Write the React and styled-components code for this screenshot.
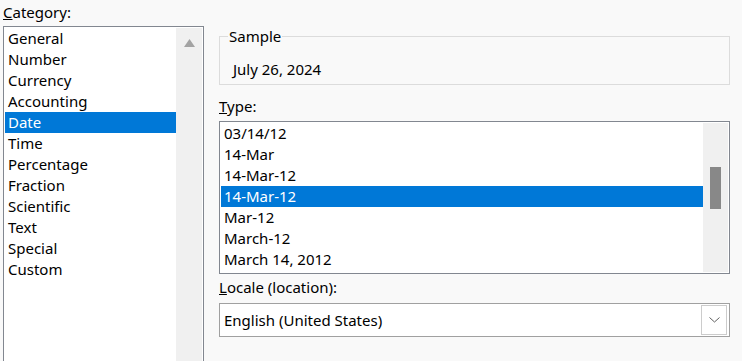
import React from 'react';
import styled, { createGlobalStyle } from 'styled-components';

const GlobalStyle = createGlobalStyle`
  body {
    margin: 0;
    background: #f9f9f9;
    font-family: "Noto Sans", "Liberation Sans", sans-serif;
    font-size: 15px;
    color: #000;
    overflow: hidden;
  }
`;

const Dialog = styled.div`
  display: flex;
  gap: 15px;
  padding: 2px 0 0 3px;
  height: 361px;
  box-sizing: border-box;
  overflow: hidden;
`;

const Column = styled.div`
  display: flex;
  flex-direction: column;
  width: ${p => p.$width}px;
  flex-shrink: 0;
`;

const Label = styled.div`
  line-height: 21px;
  height: 21px;
  margin-top: ${p => p.$top || 0}px;
  margin-bottom: ${p => p.$bottom || 0}px;
  white-space: nowrap;
`;

const ListBox = styled.div`
  display: flex;
  border: 1px solid #828790;
  background: #fff;
  padding: 1px;
  height: ${p => p.$height}px;
  flex-shrink: ${p => (p.$grow ? 1 : 0)};
  flex-grow: ${p => (p.$grow ? 1 : 0)};
  margin-bottom: ${p => (p.$grow ? -4 : 0)}px;
`;

const Items = styled.div`
  flex: 1;
  min-width: 0;
`;

const Item = styled.div`
  height: 21px;
  line-height: 21px;
  padding-left: 3px;
  white-space: nowrap;
  background: ${p => (p.$selected ? '#0078d7' : 'transparent')};
  color: ${p => (p.$selected ? '#fff' : '#000')};
`;

const ScrollTrack = styled.div`
  width: ${p => p.$width}px;
  background: #f0f0f0;
  display: flex;
  flex-direction: column;
  align-items: center;
`;

const ArrowUp = styled.svg`
  margin-top: 11px;
  display: block;
`;

const Thumb = styled.div`
  width: 11px;
  height: 42px;
  margin-top: 44px;
  background: #888;
`;

const Group = styled.fieldset`
  margin: 24px 0 0;
  padding: 0 0 4px 0;
  border: 1px solid #dcdcdc;
  min-width: 0;
`;

const Legend = styled.legend`
  margin-left: 8px;
  padding: 0 1px;
  line-height: 20px;
  height: 20px;
`;

const SampleValue = styled.div`
  margin-top: 13px;
  padding-left: 13px;
  line-height: 21px;
`;

const Combo = styled.div`
  display: flex;
  align-items: center;
  height: 34px;
  box-sizing: border-box;
  border: 1px solid #a0a0a0;
  background: #fff;
  padding: 1px 1px 1px 4px;
  flex-shrink: 0;
`;

const ComboText = styled.div`
  flex: 1;
  line-height: 21px;
  white-space: nowrap;
`;

const DropButton = styled.div`
  width: 26px;
  height: 30px;
  box-sizing: border-box;
  border: 1px solid #cccccc;
  display: flex;
  align-items: center;
  justify-content: center;
  margin-right: 1px;
`;

const categories = [
  'General', 'Number', 'Currency', 'Accounting', 'Date', 'Time',
  'Percentage', 'Fraction', 'Scientific', 'Text', 'Special', 'Custom',
];

const types = [
  '03/14/12', '14-Mar', '14-Mar-12', '14-Mar-12', 'Mar-12', 'March-12', 'March 14, 2012',
];

export default function App() {
  return (
    <>
      <GlobalStyle />
      <Dialog>
        <Column $width={201}>
          <Label $bottom={3}><u>C</u>ategory:</Label>
          <ListBox $height={340} $grow>
            <Items>
              {categories.map(c => (
                <Item key={c} $selected={c === 'Date'}>{c}</Item>
              ))}
            </Items>
            <ScrollTrack $width={26}>
              <ArrowUp width="11" height="8" viewBox="0 0 11 8">
                <polygon points="5.5,0 11,8 0,8" fill="#a3a3a3" />
              </ArrowUp>
            </ScrollTrack>
          </ListBox>
        </Column>

        <Column $width={511}>
          <Group>
            <Legend>Sample</Legend>
            <SampleValue>July 26, 2024</SampleValue>
          </Group>

          <Label $top={11} $bottom={4}><u>T</u>ype:</Label>
          <ListBox $height={149}>
            <Items>
              {types.map((t, i) => (
                <Item key={i} $selected={i === 3}>{t}</Item>
              ))}
            </Items>
            <ScrollTrack $width={25}>
              <Thumb />
            </ScrollTrack>
          </ListBox>

          <Label $top={3} $bottom={5}><u>L</u>ocale (location):</Label>
          <Combo>
            <ComboText>English (United States)</ComboText>
            <DropButton>
              <svg width="11" height="6" viewBox="0 0 11 6">
                <polyline points="0.5,0.5 5.5,5 10.5,0.5" fill="none" stroke="#606060" strokeWidth="1" />
              </svg>
            </DropButton>
          </Combo>
        </Column>
      </Dialog>
    </>
  );
}
